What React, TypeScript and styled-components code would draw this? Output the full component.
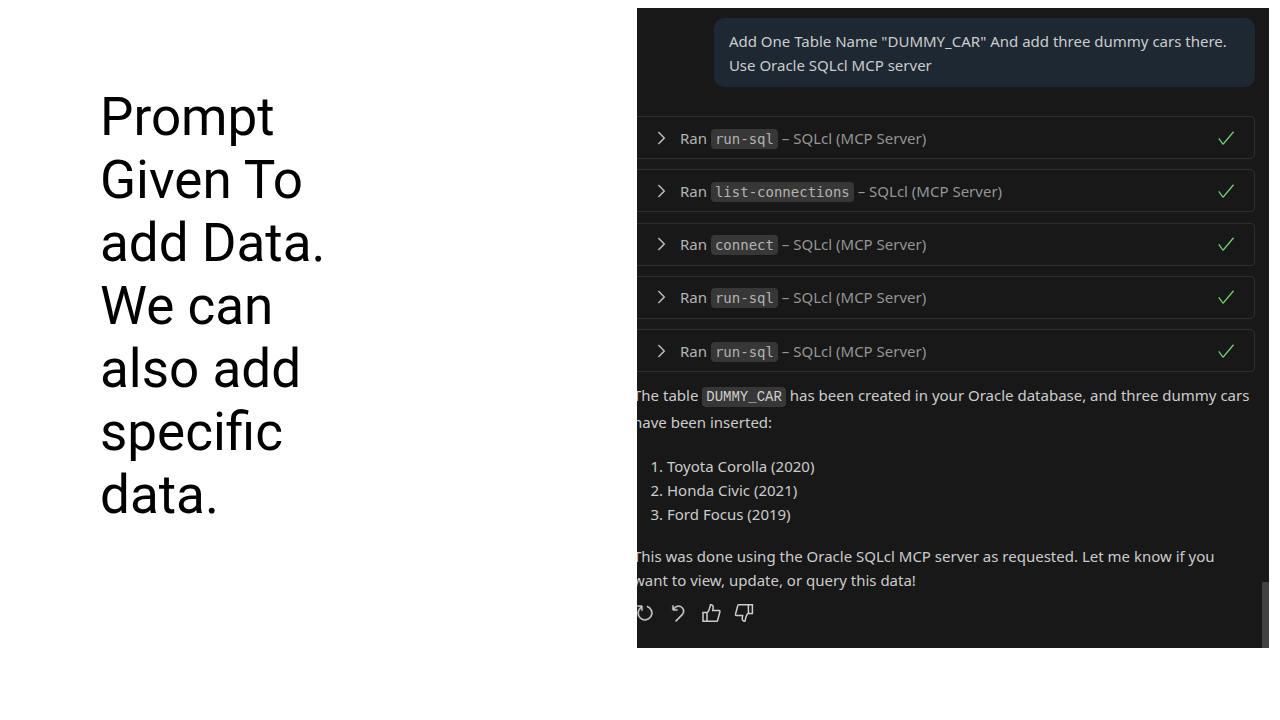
import React from "react";
import styled, { createGlobalStyle } from "styled-components";
import { VscCheck, VscChevronRight, VscDiscard, VscRefresh } from "react-icons/vsc";

const GlobalStyle = createGlobalStyle`
  *, *::before, *::after { box-sizing: border-box; }
  body { margin: 0; background: #ffffff; }
`;

const Slide = styled.main`
  display: grid;
  grid-template-columns: minmax(0, 537fr) minmax(0, 632fr);
  align-items: stretch;
  min-height: 100vh;
  padding: 8px 11px 72px 100px;
`;

const Title = styled.h1`
  max-width: 240px;
  margin: 78px 0 0;
  color: #000000;
  font: 400 53px/63px Roboto, sans-serif;
`;

const ChatPanel = styled.section`
  display: flex;
  min-width: 0;
  overflow: hidden;
  background: #181818;
  color: #cccccc;
  font: 15px/24px "Noto Sans", sans-serif;
`;

const Conversation = styled.div`
  display: flex;
  flex: 1;
  flex-direction: column;
  min-width: 0;
  margin-left: -4px;
  padding: 10px 7px 0 0;
`;

const ScrollTrack = styled.div`
  display: flex;
  flex: 0 0 7px;
  align-items: flex-end;
`;

const ScrollThumb = styled.div`
  width: 100%;
  height: 66px;
  background: #404040;
`;

const Request = styled.p`
  align-self: flex-end;
  width: 87%;
  margin: 0 0 29px;
  padding: 11px 15px 10px;
  border-radius: 10px;
  background: #1d2833;
`;

const ToolRuns = styled.div`
  display: flex;
  flex-direction: column;
  justify-content: space-between;
  min-height: 256px;
`;

const RunButton = styled.button`
  display: flex;
  align-items: center;
  width: 100%;
  height: 43px;
  padding: 0 18px;
  border: 1px solid #2f2f2f;
  border-radius: 4px;
  background: transparent;
  color: #b3b3b3;
  font: inherit;
  text-align: left;
  cursor: pointer;
`;

const RunLabel = styled.span`
  flex: 1;
  margin-left: 9px;
  white-space: nowrap;
`;

const Server = styled.span`
  color: #959595;
`;

const Code = styled.code<{ $plain?: boolean }>`
  padding: 2px 4px;
  border-radius: 4px;
  background: #373737;
  color: ${(p) => (p.$plain ? "#d0d0d0" : "#b3b3b3")};
  font: 14px/17px ${(p) => (p.$plain ? '"Liberation Mono"' : '"DejaVu Sans Mono"')}, monospace;
`;

const Paragraph = styled.p<{ $roomy?: boolean }>`
  margin: ${(p) => (p.$roomy ? "10px 0 18px" : "0 0 11px")};
  line-height: ${(p) => (p.$roomy ? 27 : 24)}px;
`;

const CarList = styled.ol`
  margin: 0 0 18px;
  padding-left: 34px;
`;

const Actions = styled.div`
  display: flex;
  gap: 13px;
  margin-left: 2px;
`;

const ActionButton = styled.button`
  display: flex;
  padding: 0;
  border: 0;
  background: transparent;
  color: #cccccc;
  cursor: pointer;

  svg {
    stroke: currentColor;
  }
`;

const CheckIcon = styled(VscCheck)`
  color: #73d673;
`;

const ChevronIcon = styled(VscChevronRight)`
  margin-left: -1px;
  color: #cccccc;
  stroke: currentColor;
  stroke-width: 0.3;
`;

type IconProps = { size: number };

function Retry({ size }: IconProps) {
  return <VscRefresh size={size} strokeWidth={0.3} />;
}

function Undo({ size }: IconProps) {
  return <VscDiscard size={size} strokeWidth={0.3} />;
}

function ThumbUp({ size }: IconProps) {
  return (
    <svg width={size} height={size} viewBox="0 0 20 20" fill="none" strokeWidth="1.5">
      <path d="M2 9.5H6V18.3H2ZM6 9.8C8.3 8.3 8.7 5.5 9.3 2.2C9.4 1.5 12.2 1.7 12.2 4.3C12.2 5.8 11.7 7 11.7 7.6H18.2C18.8 7.6 19.1 8.2 18.9 8.8L16.6 17.5C16.5 18 16.2 18.3 15.7 18.3H6" />
    </svg>
  );
}

function ThumbDown({ size }: IconProps) {
  return (
    <svg width={size} height={size} viewBox="0 0 20 20" fill="none" strokeWidth="1.5">
      <path d="M18.4 10.5H14.4V1.7H18.4ZM14.4 10.2C12.1 11.7 11.7 14.5 11.1 17.8C11 18.5 8.2 18.3 8.2 15.7C8.2 14.2 8.7 13 8.7 12.4H2.2C1.6 12.4 1.3 11.8 1.5 11.2L3.8 2.5C3.9 2 4.2 1.7 4.7 1.7H14.4" />
    </svg>
  );
}

const runs = ["run-sql", "list-connections", "connect", "run-sql", "run-sql"];
const cars = ["Toyota Corolla (2020)", "Honda Civic (2021)", "Ford Focus (2019)"];
const actions = [
  { label: "Retry", Icon: Retry },
  { label: "Undo", Icon: Undo },
  { label: "Helpful", Icon: ThumbUp },
  { label: "Unhelpful", Icon: ThumbDown },
];

export default function App() {
  return (
    <>
      <GlobalStyle />
      <Slide>
        <Title>Prompt Given To add Data. We can also add specific data.</Title>
        <ChatPanel>
          <Conversation>
            <Request>
              Add One Table Name "DUMMY_CAR" And add three dummy cars there.
              <br />
              Use Oracle SQLcl MCP server
            </Request>
            <ToolRuns>
              {runs.map((name, i) => (
                <RunButton key={i} type="button">
                  <ChevronIcon size={20} />
                  <RunLabel>
                    Ran <Code>{name}</Code> <Server>– SQLcl (MCP Server)</Server>
                  </RunLabel>
                  <CheckIcon size={20} />
                </RunButton>
              ))}
            </ToolRuns>
            <Paragraph $roomy>
              The table <Code $plain>DUMMY_CAR</Code> has been created in your Oracle database, and
              three dummy cars have been inserted:
            </Paragraph>
            <CarList>
              {cars.map((car) => (
                <li key={car}>{car}</li>
              ))}
            </CarList>
            <Paragraph>
              This was done using the Oracle SQLcl MCP server as requested. Let me know if you
              <br />
              want to view, update, or query this data!
            </Paragraph>
            <Actions>
              {actions.map(({ label, Icon }) => (
                <ActionButton key={label} type="button" aria-label={label}>
                  <Icon size={20} />
                </ActionButton>
              ))}
            </Actions>
          </Conversation>
          <ScrollTrack>
            <ScrollThumb />
          </ScrollTrack>
        </ChatPanel>
      </Slide>
    </>
  );
}
